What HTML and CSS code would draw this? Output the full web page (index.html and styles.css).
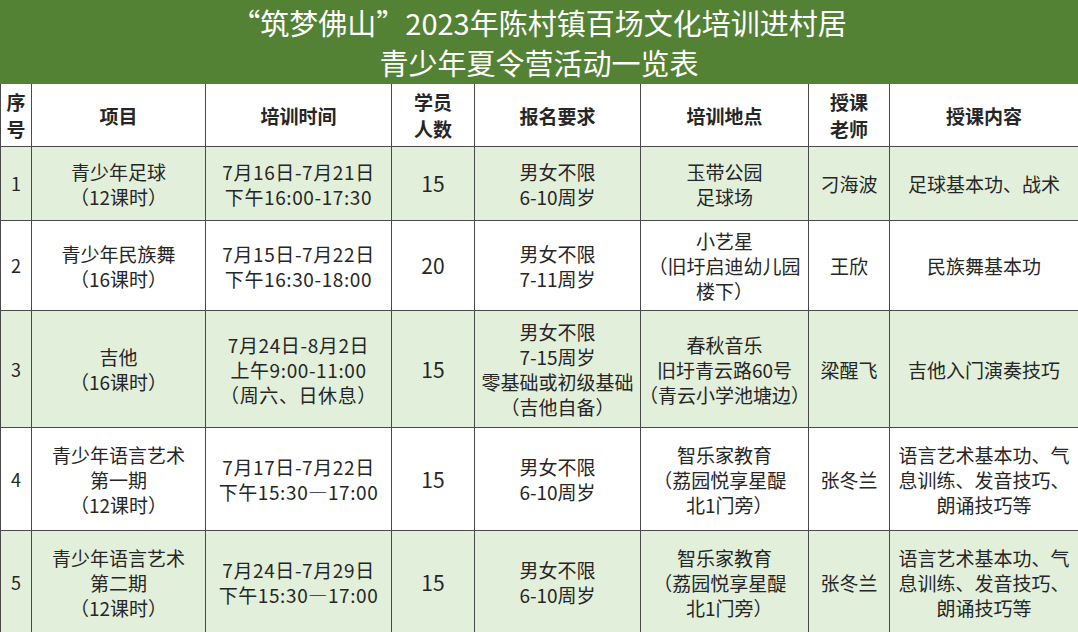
FILE: index.html
```html
<!DOCTYPE html>
<html lang="zh-CN">
<head>
<meta charset="utf-8">
<title>青少年夏令营活动一览表</title>
<link rel="stylesheet" href="styles.css">
</head>
<body>
<div class="sheet">
  <div class="title">
    <div class="title-line">“筑梦佛山”2023年陈村镇百场文化培训进村居</div>
    <div class="title-line">青少年夏令营活动一览表</div>
  </div>
  <table class="grid">
    <colgroup>
      <col class="c-no"><col class="c-item"><col class="c-time"><col class="c-num">
      <col class="c-req"><col class="c-place"><col class="c-teacher"><col class="c-content">
    </colgroup>
    <thead>
      <tr class="head">
        <th>序<br>号</th>
        <th>项目</th>
        <th>培训时间</th>
        <th>学员<br>人数</th>
        <th>报名要求</th>
        <th>培训地点</th>
        <th>授课<br>老师</th>
        <th>授课内容</th>
      </tr>
    </thead>
    <tbody>
      <tr class="r1 green">
        <td class="no">1</td>
        <td>青少年足球<br>（12课时）</td>
        <td class="time">7月16日-7月21日<br>下午16:00-17:30</td>
        <td class="num">15</td>
        <td>男女不限<br>6-10周岁</td>
        <td>玉带公园<br>足球场</td>
        <td>刁海波</td>
        <td>足球基本功、战术</td>
      </tr>
      <tr class="r2">
        <td class="no">2</td>
        <td>青少年民族舞<br>（16课时）</td>
        <td class="time">7月15日-7月22日<br>下午16:30-18:00</td>
        <td class="num">20</td>
        <td>男女不限<br>7-11周岁</td>
        <td>小艺星<br>（旧圩启迪幼儿园<br>楼下）</td>
        <td>王欣</td>
        <td>民族舞基本功</td>
      </tr>
      <tr class="r3 green">
        <td class="no">3</td>
        <td>吉他<br>（16课时）</td>
        <td class="time">7月24日-8月2日<br>上午9:00-11:00<br>（周六、日休息）</td>
        <td class="num">15</td>
        <td>男女不限<br>7-15周岁<br>零基础或初级基础<br>（吉他自备）</td>
        <td>春秋音乐<br>旧圩青云路60号<br><span class="halt">（青云小学池塘边）</span></td>
        <td>梁醒飞</td>
        <td>吉他入门演奏技巧</td>
      </tr>
      <tr class="r4">
        <td class="no">4</td>
        <td>青少年语言艺术<br>第一期<br>（12课时）</td>
        <td class="time">7月17日-7月22日<br>下午15:30—17:00</td>
        <td class="num">15</td>
        <td>男女不限<br>6-10周岁</td>
        <td>智乐家教育<br><span class="halt">（</span>荔园悦享星醍<br>北1门旁<span class="halt">）</span></td>
        <td>张冬兰</td>
        <td>语言艺术基本功、气<br>息训练、发音技巧、<br>朗诵技巧等</td>
      </tr>
      <tr class="r5 green">
        <td class="no">5</td>
        <td>青少年语言艺术<br>第二期<br>（12课时）</td>
        <td class="time">7月24日-7月29日<br>下午15:30—17:00</td>
        <td class="num">15</td>
        <td>男女不限<br>6-10周岁</td>
        <td>智乐家教育<br><span class="halt">（</span>荔园悦享星醍<br>北1门旁<span class="halt">）</span></td>
        <td>张冬兰</td>
        <td>语言艺术基本功、气<br>息训练、发音技巧、<br>朗诵技巧等</td>
      </tr>
    </tbody>
  </table>
</div>
</body>
</html>
```

FILE: styles.css
```css
html, body {
  margin: 0;
  padding: 0;
  background: #ffffff;
}

body {
  font-family: "Noto Sans CJK SC", "Noto Sans", sans-serif;
  color: #262626;
  width: 1078px;
  height: 632px;
  overflow: hidden;
}

.sheet {
  width: 1078px;
}

.title {
  background: #548235;
  color: #ffffff;
  height: 84px;
  display: flex;
  flex-direction: column;
  justify-content: center;
  align-items: center;
  font-size: 29px;
  line-height: 40px;
}

.title-line {
  white-space: nowrap;
}

.grid {
  width: 1078px;
  border-collapse: collapse;
  table-layout: fixed;
  font-size: 19px;
  line-height: 25px;
}

.c-no { width: 31px; }
.c-item { width: 174px; }
.c-time { width: 186px; }
.c-num { width: 83px; }
.c-req { width: 166px; }
.c-place { width: 168px; }
.c-teacher { width: 81px; }
.c-content { width: 189px; }

.grid th,
.grid td {
  border: 1px solid #4a4a4a;
  padding: 0;
  text-align: center;
  vertical-align: middle;
  white-space: nowrap;
  overflow: hidden;
}

.grid th {
  font-weight: 700;
  height: 62px;
  line-height: 27px;
}

.grid thead th {
  border-top: none;
}

.green td {
  background: #e2efda;
}

.no {
  font-size: 18px;
}

.time {
  letter-spacing: 0.6px;
}

.num {
  font-size: 21px;
}

.halt {
  font-feature-settings: "halt";
}

.r1 td { height: 73px; }
.r2 td { height: 89px; }
.r3 td { height: 116px; }
.r4 td { height: 102px; }
.r5 td { height: 102px; }
```
